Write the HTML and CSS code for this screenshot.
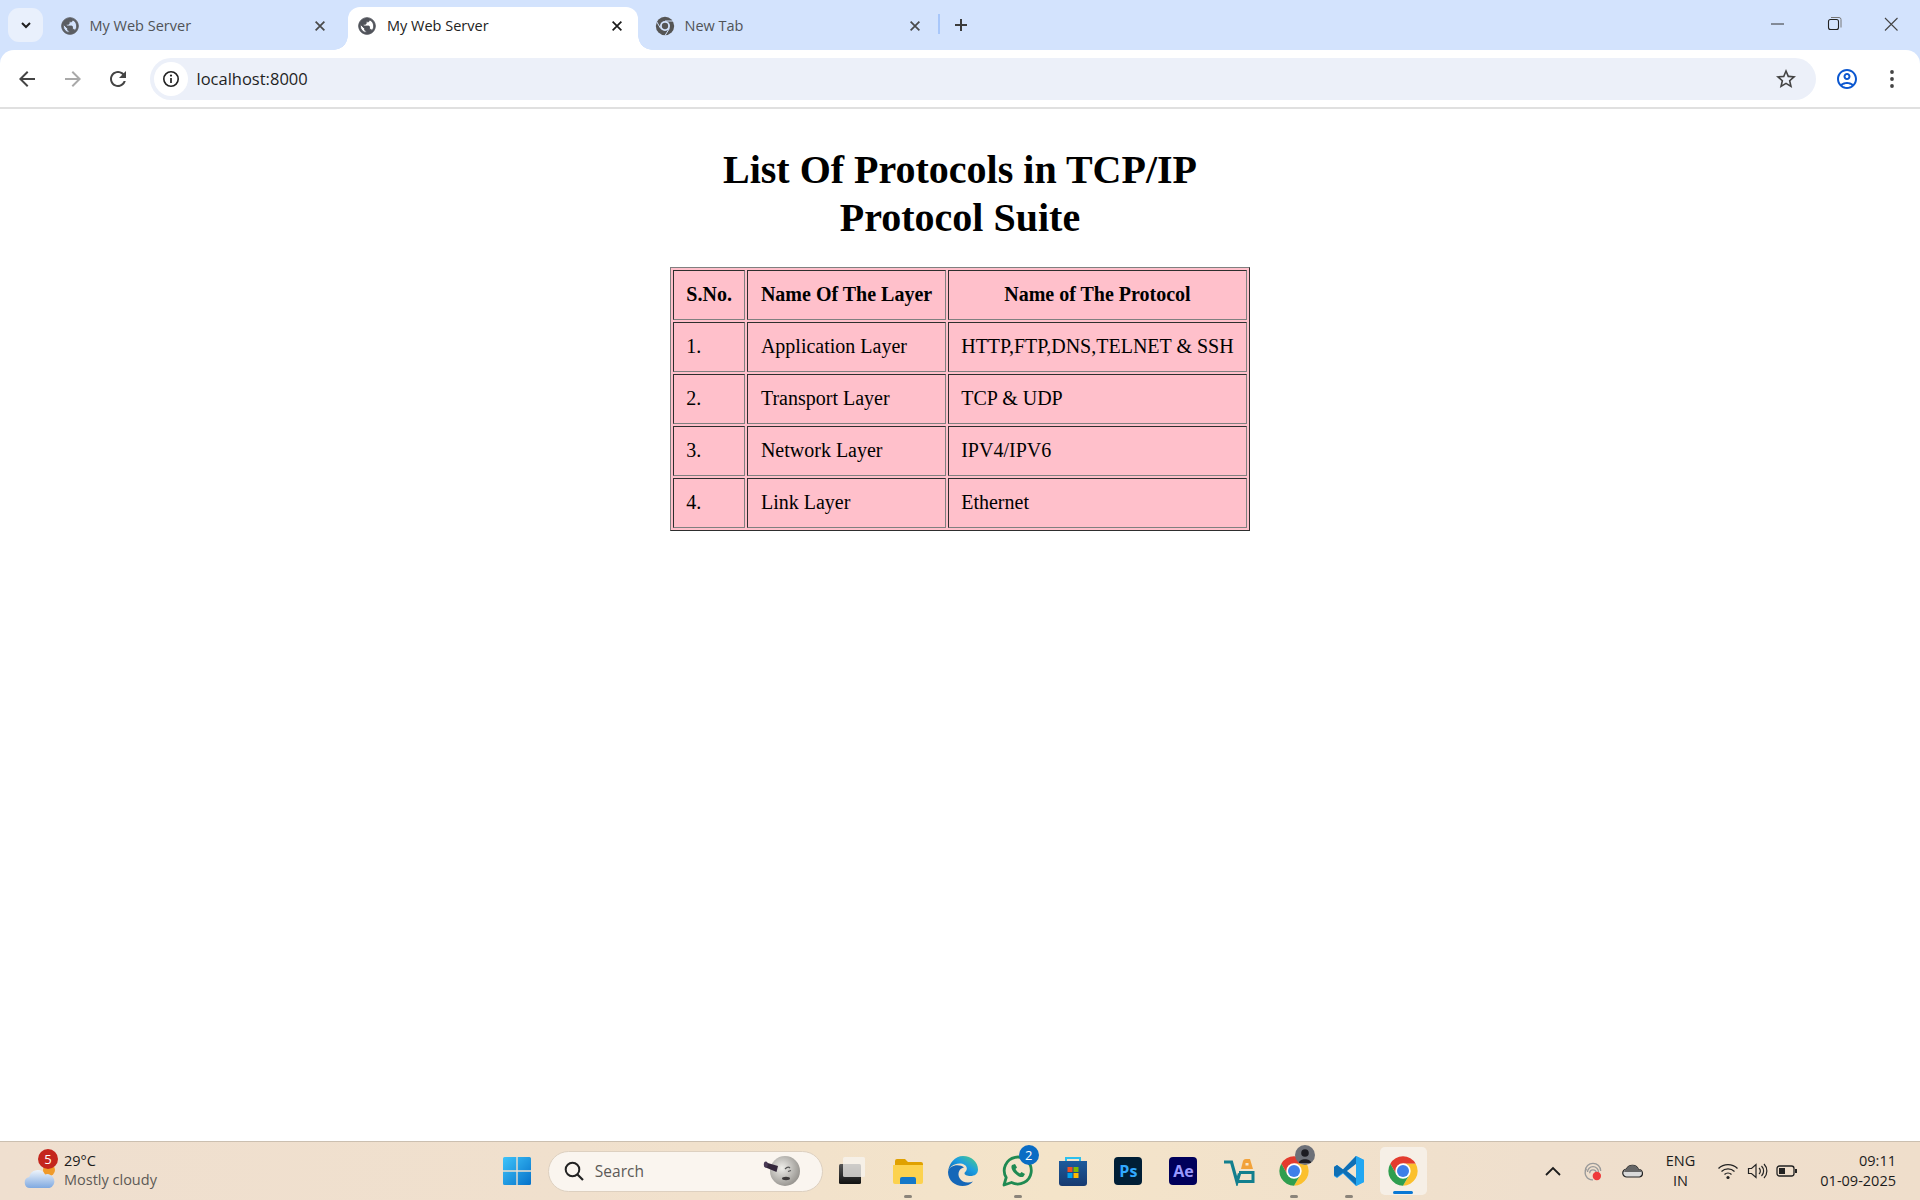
FILE: index.html
```html
<!DOCTYPE html>
<html lang="en">
<head>
<meta charset="utf-8">
<title>My Web Server</title>
<link rel="stylesheet" href="styles.css">
</head>
<body>
<svg class="defs" width="0" height="0" aria-hidden="true">
  <symbol id="globe" viewBox="0 0 24 24"><path d="M12 2C6.48 2 2 6.48 2 12s4.48 10 10 10 10-4.48 10-10S17.52 2 12 2zm-1 17.93c-3.95-.49-7-3.85-7-7.93 0-.62.08-1.21.21-1.79L9 15v1c0 1.1.9 2 2 2v1.93zm6.9-2.54c-.26-.81-1-1.39-1.9-1.39h-1v-3c0-.55-.45-1-1-1H8v-2h2c.55 0 1-.45 1-1V7h2c1.1 0 2-.9 2-2v-.41c2.93 1.19 5 4.06 5 7.41 0 2.08-.8 3.97-2.1 5.39z" fill="currentColor" stroke="currentColor" stroke-width="1"/></symbol>
  <symbol id="close" viewBox="0 0 16 16"><path d="M3 3l10 10M13 3L3 13" stroke="currentColor" stroke-width="2" fill="none"/></symbol>
  <symbol id="chrome" viewBox="0 0 48 48">
    <path d="M4.95 13A22 22 0 0 1 43.05 13H24L14.47 29.5Z" fill="#e33b2e"/>
    <path d="M43.05 13A22 22 0 0 1 24 46L33.53 29.5 24 13Z" fill="#fbc02d"/>
    <path d="M24 46A22 22 0 0 1 4.95 13L14.47 29.5H33.53Z" fill="#2f9e4f"/>
    <circle cx="24" cy="24" r="11.5" fill="#fff"/><circle cx="24" cy="24" r="9" fill="#3f7fe8"/>
  </symbol>
</svg>

<div class="browser">
  <header class="tabstrip">
    <button class="tabsearch"><svg width="12" height="12" viewBox="0 0 12 12"><path d="M2 4l4 4 4-4" stroke="#1f1f1f" stroke-width="2" fill="none"/></svg></button>
    <div class="tab">
      <svg class="favicon"><use href="#globe"/></svg>
      <span class="tabtitle">My Web Server</span>
      <svg class="tabclose"><use href="#close"/></svg>
    </div>
    <div class="tab active">
      <svg class="favicon"><use href="#globe"/></svg>
      <span class="tabtitle">My Web Server</span>
      <svg class="tabclose"><use href="#close"/></svg>
    </div>
    <div class="tab">
      <svg class="favicon" viewBox="0 0 24 24"><circle cx="12" cy="12" r="11" fill="#555"/><circle cx="12" cy="12" r="6" fill="#d3e3fd"/><circle cx="12" cy="12" r="3.800" fill="#555"/><path d="M12 6H22.500M6.800 15L1.800 6.500M17.200 15L12 23.500" stroke="#d3e3fd" stroke-width="1.200"/></svg>
      <span class="tabtitle">New Tab</span>
      <svg class="tabclose"><use href="#close"/></svg>
    </div>
    <span class="tabsep"></span>
    <svg class="newtab" width="16" height="16" viewBox="0 0 16 16"><path d="M8 2v12M2 8h12" stroke="#3c3c3c" stroke-width="2"/></svg>
    <div class="winctl">
      <svg width="16" height="16" viewBox="0 0 16 16"><path d="M2 8h13" stroke="#333" stroke-width="1"/></svg>
      <svg width="16" height="16" viewBox="0 0 16 16"><rect x="2.5" y="3.5" width="10" height="10" rx="2" fill="none" stroke="#222" stroke-width="1.1"/><path d="M5 1.5h8a2 2 0 0 1 2 2v8" fill="none" stroke="#777" stroke-width="1"/></svg>
      <svg width="16" height="16" viewBox="0 0 16 16"><path d="M2 2l12.5 12.5M14.5 2L2 14.5" stroke="#444" stroke-width="1.1"/></svg>
    </div>
  </header>

  <nav class="toolbar">
    <svg class="navbtn" viewBox="0 0 24 24"><path d="M20 11H7.83l5.59-5.59L12 4l-8 8 8 8 1.41-1.41L7.83 13H20v-2z" fill="#444"/></svg>
    <svg class="navbtn" viewBox="0 0 24 24"><path d="M12 4l-1.41 1.41L16.17 11H4v2h12.17l-5.58 5.59L12 20l8-8z" fill="#a9a9a9"/></svg>
    <svg class="navbtn" viewBox="0 0 24 24"><path d="M17.65 6.35C16.2 4.9 14.21 4 12 4c-4.42 0-7.99 3.58-7.99 8s3.57 8 7.99 8c3.73 0 6.84-2.55 7.73-6h-2.08c-.82 2.33-3.04 4-5.65 4-3.31 0-6-2.69-6-6s2.69-6 6-6c1.66 0 3.14.69 4.22 1.78L13 11h7V4l-2.35 2.35z" fill="#444"/></svg>
    <div class="omnibox">
      <span class="siteinfo"><svg width="18" height="18" viewBox="0 0 18 18"><circle cx="9" cy="9" r="7.2" fill="none" stroke="#222" stroke-width="1.6"/><path d="M9 8v5" stroke="#222" stroke-width="1.7"/><circle cx="9" cy="5.6" r="1.1" fill="#222"/></svg></span>
      <span class="url">localhost:8000</span>
      <svg class="star" viewBox="0 0 24 24"><path d="M22 9.24l-7.19-.62L12 2 9.19 8.63 2 9.24l5.46 4.73L5.82 21 12 17.27 18.18 21l-1.63-7.03L22 9.24zM12 15.4l-3.76 2.27 1-4.28-3.32-2.88 4.38-.38L12 6.1l1.71 4.04 4.38.38-3.32 2.88 1 4.28L12 15.4z" fill="#444"/></svg>
    </div>
    <svg class="profile" viewBox="0 0 24 24"><path d="M12 2C6.48 2 2 6.48 2 12s4.48 10 10 10 10-4.48 10-10S17.52 2 12 2zM7.35 18.5C8.66 17.56 10.26 17 12 17s3.34.56 4.65 1.5C15.34 19.44 13.74 20 12 20s-3.34-.56-4.65-1.5zm10.79-1.38C16.45 15.8 14.32 15 12 15s-4.45.8-6.14 2.12C4.7 15.73 4 13.95 4 12c0-4.42 3.58-8 8-8s8 3.58 8 8c0 1.95-.7 3.73-1.86 5.12z" fill="#0b57d0"/><path d="M12 6c-1.93 0-3.5 1.57-3.5 3.5S10.07 13 12 13s3.5-1.57 3.5-3.5S13.93 6 12 6zm0 5c-.83 0-1.5-.67-1.5-1.5S11.17 8 12 8s1.5.67 1.5 1.5S12.83 11 12 11z" fill="#0b57d0"/></svg>
    <svg class="menu" viewBox="0 0 4 20"><circle cx="2" cy="3" r="1.9" fill="#444"/><circle cx="2" cy="10" r="1.9" fill="#444"/><circle cx="2" cy="17" r="1.9" fill="#444"/></svg>
  </nav>

  <main class="page">
    <h1 class="title">List Of Protocols in TCP/IP Protocol Suite</h1>
    <table class="protocols">
      <tr><th>S.No.</th><th>Name Of The Layer</th><th>Name of The Protocol</th></tr>
      <tr><td>1.</td><td>Application Layer</td><td>HTTP,FTP,DNS,TELNET &amp; SSH</td></tr>
      <tr><td>2.</td><td>Transport Layer</td><td>TCP &amp; UDP</td></tr>
      <tr><td>3.</td><td>Network Layer</td><td>IPV4/IPV6</td></tr>
      <tr><td>4.</td><td>Link Layer</td><td>Ethernet</td></tr>
    </table>
  </main>
</div>

<footer class="taskbar">
  <div class="weather">
    <span class="wicon">
      <svg width="34" height="30" viewBox="0 0 34 30"><defs><linearGradient id="cl" x1="0" y1="0" x2="0" y2="1"><stop offset="0" stop-color="#eef4fb"/><stop offset="1" stop-color="#7fa9e0"/></linearGradient></defs><circle cx="25" cy="10" r="6" fill="#f09a2a"/><path d="M6 28a5.5 5.5 0 0 1-.8-10.9A8.5 8.5 0 0 1 21 14.5 6.8 6.8 0 0 1 25.5 28Z" fill="url(#cl)"/></svg>
      <b class="wbadge">5</b>
    </span>
    <span class="wtext"><span class="wtemp">29°C</span><span class="wdesc">Mostly cloudy</span></span>
  </div>

  <div class="apps">
    <span class="app"><svg width="30" height="30" viewBox="0 0 30 30"><defs><linearGradient id="wn" x1="0" y1="0" x2="1" y2="1"><stop offset="0" stop-color="#3fc4fa"/><stop offset="1" stop-color="#0571c9"/></linearGradient></defs><path d="M1 2.5A1.5 1.5 0 0 1 2.500 1H14.300V14.300H1ZM15.700 1H27.500A1.500 1.500 0 0 1 29 2.500V14.300H15.700ZM1 15.700H14.300V29H2.500A1.500 1.500 0 0 1 1 27.500ZM15.700 15.700H29V27.500A1.500 1.500 0 0 1 27.500 29H15.700Z" fill="url(#wn)"/></svg></span>
    <div class="searchbox">
      <svg width="22" height="22" viewBox="0 0 22 22"><circle cx="9.500" cy="9.500" r="6.800" fill="none" stroke="#222" stroke-width="2"/><path d="M14.500 14.500L20 20" stroke="#222" stroke-width="2.200"/></svg>
      <span class="searchtext">Search</span>
      <svg class="moon" width="38" height="34" viewBox="0 0 38 34"><defs><radialGradient id="mn" cx=".4" cy=".4" r=".7"><stop offset="0" stop-color="#efeeea"/><stop offset="1" stop-color="#8d8a85"/></radialGradient></defs><circle cx="22" cy="17" r="15" fill="url(#mn)"/><path d="M3 8.500L15 12 13.500 18 1.500 13Z" fill="#33263a"/><ellipse cx="2.800" cy="10.500" rx="2" ry="3" fill="#4a3a55"/><path d="M22 15q3-3 5-1M25 17.500l3-1" stroke="#555" stroke-width="1.200" fill="none"/><ellipse cx="23" cy="24.500" rx="4" ry="1.700" fill="#3d3a3a"/></svg>
    </div>
    <span class="app"><svg width="30" height="30" viewBox="0 0 30 30"><defs><linearGradient id="tv" x1="0" y1="0" x2="0" y2="1"><stop offset="0" stop-color="#555"/><stop offset="1" stop-color="#111"/></linearGradient></defs><rect x="4" y="8" width="22" height="20" rx="1.500" fill="url(#tv)"/><rect x="11" y="1" width="22" height="20" rx="1.500" fill="#f7f4f0" opacity=".75" transform="translate(-3 0)"/></svg></span>
    <span class="app running shifted"><svg width="34" height="30" viewBox="0 0 34 30"><path d="M4 5a2 2 0 0 1 2-2h8l3 3h13a2 2 0 0 1 2 2v2H4Z" fill="#e0a100"/><path d="M2 9h30v17a2 2 0 0 1-2 2H4a2 2 0 0 1-2-2Z" fill="#fcd24f"/><path d="M9 28v-5a2 2 0 0 1 2-2h12a2 2 0 0 1 2 2v5Z" fill="#1478c8"/></svg></span>
    <span class="app"><svg width="32" height="32" viewBox="0 0 32 32"><defs><linearGradient id="eg" x1="0" y1="1" x2="1" y2="0"><stop offset="0" stop-color="#0c59a4"/><stop offset=".55" stop-color="#1b9de2"/><stop offset="1" stop-color="#52d17c"/></linearGradient></defs><path d="M16 1C24.500 1 31 7 31 14.500 31 19 27.500 21 23.500 21 20 21 17.500 20 17.500 18.300 17.500 17 19.800 16.500 19.800 13.500 19.800 10.500 16.500 8.500 12.500 8.500 6.500 8.500 2 12.500 1 17 2 8 8 1 16 1Z" fill="url(#eg)"/><path d="M1 17C1 25.500 8 31 15.500 31 19.500 31 23.500 29.500 26 26.500 21 28.500 15 27.500 12.500 23 10 18.500 12.500 13 17 12.500 13 8.500 2 9.500 1 17Z" fill="#1567b8"/></svg></span>
    <span class="app running"><svg width="34" height="34" viewBox="0 0 34 34"><path d="M3 31l2.200-7.500A13.500 13.500 0 1 1 10.500 28.500Z" fill="none" stroke="#1f8a52" stroke-width="2.800" stroke-linejoin="round"/><path d="M11 11c-1.500 2 0 5.500 3 8.500s6.500 4.500 8.500 3l1.500-2.500-3.500-2-1.500 1.500c-2-1-3.500-2.500-4.500-4.500l1.500-1.500-2-3.500Z" fill="#1f8a52"/></svg><b class="appbadge">2</b></span>
    <span class="app"><svg width="30" height="32" viewBox="0 0 30 32"><defs><linearGradient id="st" x1="0" y1="0" x2="0" y2="1"><stop offset="0" stop-color="#1c5a9c"/><stop offset="1" stop-color="#173a70"/></linearGradient></defs><path d="M8 6V3h14v3" fill="none" stroke="#2cc0ee" stroke-width="2"/><path d="M1 6h28v22a3 3 0 0 1-3 3H4a3 3 0 0 1-3-3Z" fill="url(#st)"/><rect x="9.500" y="12" width="5" height="5" fill="#f25022"/><rect x="15.500" y="12" width="5" height="5" fill="#7fba00"/><rect x="9.500" y="18" width="5" height="5" fill="#00a4ef"/><rect x="15.500" y="18" width="5" height="5" fill="#ffb900"/></svg></span>
    <span class="app"><span class="adobe ps">Ps</span></span>
    <span class="app"><span class="adobe ae">Ae</span></span>
    <span class="app"><svg width="32" height="30" viewBox="0 0 32 30"><path d="M1 6h7.500l5.500 20 2.500-8.500" fill="none" stroke="#127f8e" stroke-width="3.200"/><path d="M16 16.500h14v9H15" fill="none" stroke="#127f8e" stroke-width="3"/><path d="M18 13l2-8a3 3 0 0 1 3-2h4l3 10Z" fill="#f2a23a"/><rect x="22.500" y="7" width="3" height="2.500" fill="#f6e6cf"/></svg></span>
    <span class="app running"><svg width="32" height="32"><use href="#chrome"/></svg><span class="avatar"><svg width="20" height="20" viewBox="0 0 20 20"><circle cx="10" cy="10" r="10" fill="#6d7078"/><circle cx="10" cy="8" r="3.800" fill="#1c1c22"/><path d="M4 18c0-5 12-5 12 0Z" fill="#1c1c22"/></svg></span></span>
    <span class="app running"><svg width="32" height="32" viewBox="0 0 32 32"><path d="M23 1l8 4v22l-8 4-13-12.500-6 4.500-3-2V12l3-2 6 4.500Z" fill="#1f9cf0"/><path d="M23 1l8 4v22l-8 4Z" fill="#22a7f2"/><path d="M10 14.500l-6-4.500-3 2v8l3 2 6-4.500 13 12.500V23l-9-7 9-7V1Z" fill="#0f6fb5"/><path d="M23 9l-9 7 9 7Z" fill="#f4e4cd"/></svg></span>
    <span class="app current"><svg width="32" height="32"><use href="#chrome"/></svg></span>
  </div>

  <div class="tray">
    <span class="trayicon w40"><svg width="18" height="12" viewBox="0 0 18 12"><path d="M2 10l7-7 7 7" fill="none" stroke="#1c1c1c" stroke-width="1.800"/></svg></span>
    <span class="trayicon w40"><svg width="22" height="22" viewBox="0 0 20 20"><path d="M3 10a7 7 0 0 1 14 0M5 11a5 5 0 0 1 10 0M7 12a3 3 0 0 1 6 0" fill="none" stroke="#9a9a9a" stroke-width="1.200"/><path d="M4 8a6.500 6.500 0 0 0 6 10" fill="none" stroke="#9a9a9a" stroke-width="1.200"/><circle cx="13.500" cy="14.500" r="3.800" fill="#ef3a3a"/></svg></span>
    <span class="trayicon w40"><svg width="22" height="14" viewBox="0 0 22 14"><path d="M5 13a4 4 0 0 1-.5-8A6.500 6.500 0 0 1 16.500 5.500 3.800 3.800 0 0 1 17.500 13Z" fill="#dadada" stroke="#222" stroke-width="1.200"/><path d="M2 8a4 4 0 0 1 2.500-3A6.500 6.500 0 0 1 16.500 5.500 3.800 3.800 0 0 1 20.500 8Z" fill="#666"/></svg></span>
    <span class="lang"><span>ENG</span><span>IN</span></span>
    <span class="trayicon w30"><svg width="22" height="18" viewBox="0 0 22 18"><path d="M1.500 6.500a13.500 13.500 0 0 1 19 0M4.500 9.500a9.500 9.500 0 0 1 13 0M7.500 12.500a5 5 0 0 1 7 0" fill="none" stroke="#222" stroke-width="1.300"/><circle cx="11" cy="15.500" r="1.600" fill="#222"/></svg></span>
    <span class="trayicon w30"><svg width="22" height="18" viewBox="0 0 22 18"><path d="M1.500 6.500h3L9 2.500v13l-4.500-4h-3Z" fill="none" stroke="#222" stroke-width="1.200"/><path d="M12 6a4 4 0 0 1 0 6M14.500 4a7 7 0 0 1 0 10M17 2a10 10 0 0 1 0 14" fill="none" stroke="#222" stroke-width="1.200"/></svg></span>
    <span class="trayicon w30"><svg width="22" height="14" viewBox="0 0 22 14"><rect x="1" y="2" width="17" height="10" rx="2.500" fill="none" stroke="#222" stroke-width="1.300"/><rect x="3" y="4" width="6" height="6" fill="#222"/><rect x="19" y="5" width="2" height="4" fill="#222"/></svg></span>
    <span class="clock"><span>09:11</span><span>01-09-2025</span></span>
  </div>
</footer>
</body>
</html>
```
FILE: styles.css
```css
* { box-sizing: border-box; }
html, body { margin: 0; height: 100%; }
body { display: flex; flex-direction: column; height: 1200px; overflow: hidden; background: #fff; font-family: "Open Sans", "Noto Sans", sans-serif; }
.defs { position: absolute; }

.browser { flex: 1; display: flex; flex-direction: column; min-height: 0; background: #d3e3fd; }

/* tab strip */
.tabstrip { height: 50px; flex: none; display: flex; align-items: flex-start; padding-left: 8px; }
.tabsearch { width: 35px; height: 34px; margin-top: 8px; margin-right: 7.5px; border: 0; padding: 0; border-radius: 11px; background: #e9f0fc; display: flex; align-items: center; justify-content: center; }
.tab { width: 290px; height: 43px; margin-top: 7px; margin-right: 7.5px; padding: 0 14px 6px 9px; display: flex; align-items: center; position: relative; color: #505357; border-radius: 12px 12px 0 0; }
.tab.active { background: #fff; color: #222; }
.tab.active::before, .tab.active::after { content: ""; position: absolute; bottom: 0; width: 14px; height: 14px; }
.tab.active::before { left: -14px; background: radial-gradient(circle at 0 0, transparent 13.5px, #fff 14px); }
.tab.active::after { right: -14px; background: radial-gradient(circle at 100% 0, transparent 13.500px, #fff 14px); }
.favicon { width: 20px; height: 20px; flex: none; color: #5a5d62; }
.active .favicon { color: #50535a; }
.tabtitle { flex: 1; margin-left: 10px; font-size: 14.500px; white-space: nowrap; }
.tabclose { width: 14px; height: 14px; flex: none; color: #4a4a4a; }
.active .tabclose { color: #1c1c1c; }
.tabsep { width: 2px; height: 20px; margin: 14px 0 0 -5px; background: #a8c7fa; }
.newtab { margin: 17px 0 0 13px; flex: none; }
.winctl { margin-left: auto; padding: 16px 21px 0 0; display: flex; gap: 41px; }

/* toolbar */
.toolbar { height: 59px; flex: none; background: #fff; border-radius: 14px 14px 0 0; border-bottom: 2px solid #e0e0e0; display: flex; align-items: center; padding-left: 15px; }
.navbtn { width: 24px; height: 24px; margin-right: 21.500px; flex: none; }
.omnibox { width: 1666px; height: 42px; margin-left: -2px; border-radius: 21px; background: #ecf0f9; display: flex; align-items: center; padding: 0 18px 0 4px; }
.siteinfo { width: 34px; height: 34px; border-radius: 50%; background: #fff; display: flex; align-items: center; justify-content: center; flex: none; }
.url { flex: 1; margin-left: 9px; font-size: 16.500px; color: #1f1f1f; }
.star { width: 24px; height: 24px; flex: none; }
.profile { width: 24px; height: 24px; margin-left: 19px; flex: none; }
.menu { width: 4px; height: 20px; margin-left: 31.500px; flex: none; }

/* page */
.page { flex: 1; background: #fff; display: flex; flex-direction: column; align-items: center; padding-top: 37px; }
.title { width: 580px; margin: 0 0 26px; font: bold 40px/47.500px "Liberation Serif", serif; text-align: center; color: #000; }
.protocols { border-collapse: separate; border-spacing: 2px; background: #ffc0cb; border: 1px solid; border-color: #808080 #2e2e2e #2e2e2e #808080; font: 20px/23px "Liberation Serif", serif; color: #000; }
.protocols th, .protocols td { padding: 12px 12.500px 13px; border: 1px solid; border-color: #2e2e2e #808080 #808080 #2e2e2e; }
.protocols th { font-weight: bold; text-align: center; }
.protocols td { text-align: left; }

/* taskbar */
.taskbar { height: 59px; flex: none; border-top: 1px solid #cbbfb0; background: linear-gradient(90deg, #efdfcf 0%, #f0e0cd 30%, #f4e4c9 55%, #efdfcd 80%, #efdecb 100%); display: grid; grid-template-columns: 1fr auto 1fr; align-items: center; }
.weather { display: flex; align-items: center; padding-left: 24px; }
.wicon { width: 40px; height: 46px; display: flex; align-items: flex-end; position: relative; padding-bottom: 4px; }
.wbadge { position: absolute; left: 14px; top: 1px; width: 20px; height: 20px; border-radius: 50%; background: #c4261d; color: #fff; font: 13px/20px "Open Sans", sans-serif; text-align: center; }
.wtext { display: flex; flex-direction: column; margin-top: -2px; font-size: 14.500px; line-height: 19.500px; }
.wtemp { color: #1c1c1c; }
.wdesc { color: #5d5a56; }

.apps { display: flex; align-items: center; margin-left: -4px; }
.app { width: 55.100px; height: 58px; display: flex; align-items: center; justify-content: center; position: relative; flex: none; }
.app.shifted { margin-left: 2.500px; }
.app.running::after { content: ""; position: absolute; left: 50%; bottom: 2px; width: 8px; height: 3px; margin-left: -4px; border-radius: 2px; background: #8b847a; }
.app.current { width: 47px; height: 48px; margin-left: 3.500px; border-radius: 5px; background: #f6efe6; }
.app.current::after { content: ""; position: absolute; left: 50%; bottom: 1px; width: 20px; height: 3px; margin-left: -10px; border-radius: 2px; background: #0a78d4; }
.appbadge { position: absolute; top: 3px; right: 7px; width: 20px; height: 20px; border-radius: 50%; background: #0a6cc4; color: #fff; font: 13px/20px "Open Sans", sans-serif; text-align: center; }
.avatar { position: absolute; top: 3px; right: 6px; width: 20px; height: 20px; }
.adobe { width: 28px; height: 28px; border-radius: 4px; font: bold 16px/28px "Open Sans", sans-serif; text-align: center; }
.ps { background: #001e36; color: #31a8ff; }
.ae { background: #00005b; color: #9999ff; }
.searchbox { width: 275px; height: 41px; margin-left: 3.500px; padding: 0 21px 0 14px; border: 1px solid #ddd0c0; border-radius: 21px; background: #faf5ef; display: flex; align-items: center; }
.searchtext { flex: 1; margin-left: 10px; font-size: 15.500px; color: #5c5a57; }

.tray { display: flex; align-items: center; justify-content: flex-end; padding-right: 24px; color: #1c1c1c; }
.trayicon { display: flex; align-items: center; justify-content: center; flex: none; }
.w40 { width: 40px; }
.w30 { width: 29.500px; }
.lang { width: 56px; margin-right: 5px; display: flex; flex-direction: column; align-items: center; font-size: 14.500px; line-height: 20px; }
.clock { width: 94px; display: flex; flex-direction: column; align-items: flex-end; margin-top: -1px; font-size: 14.500px; line-height: 19.500px; }
```
